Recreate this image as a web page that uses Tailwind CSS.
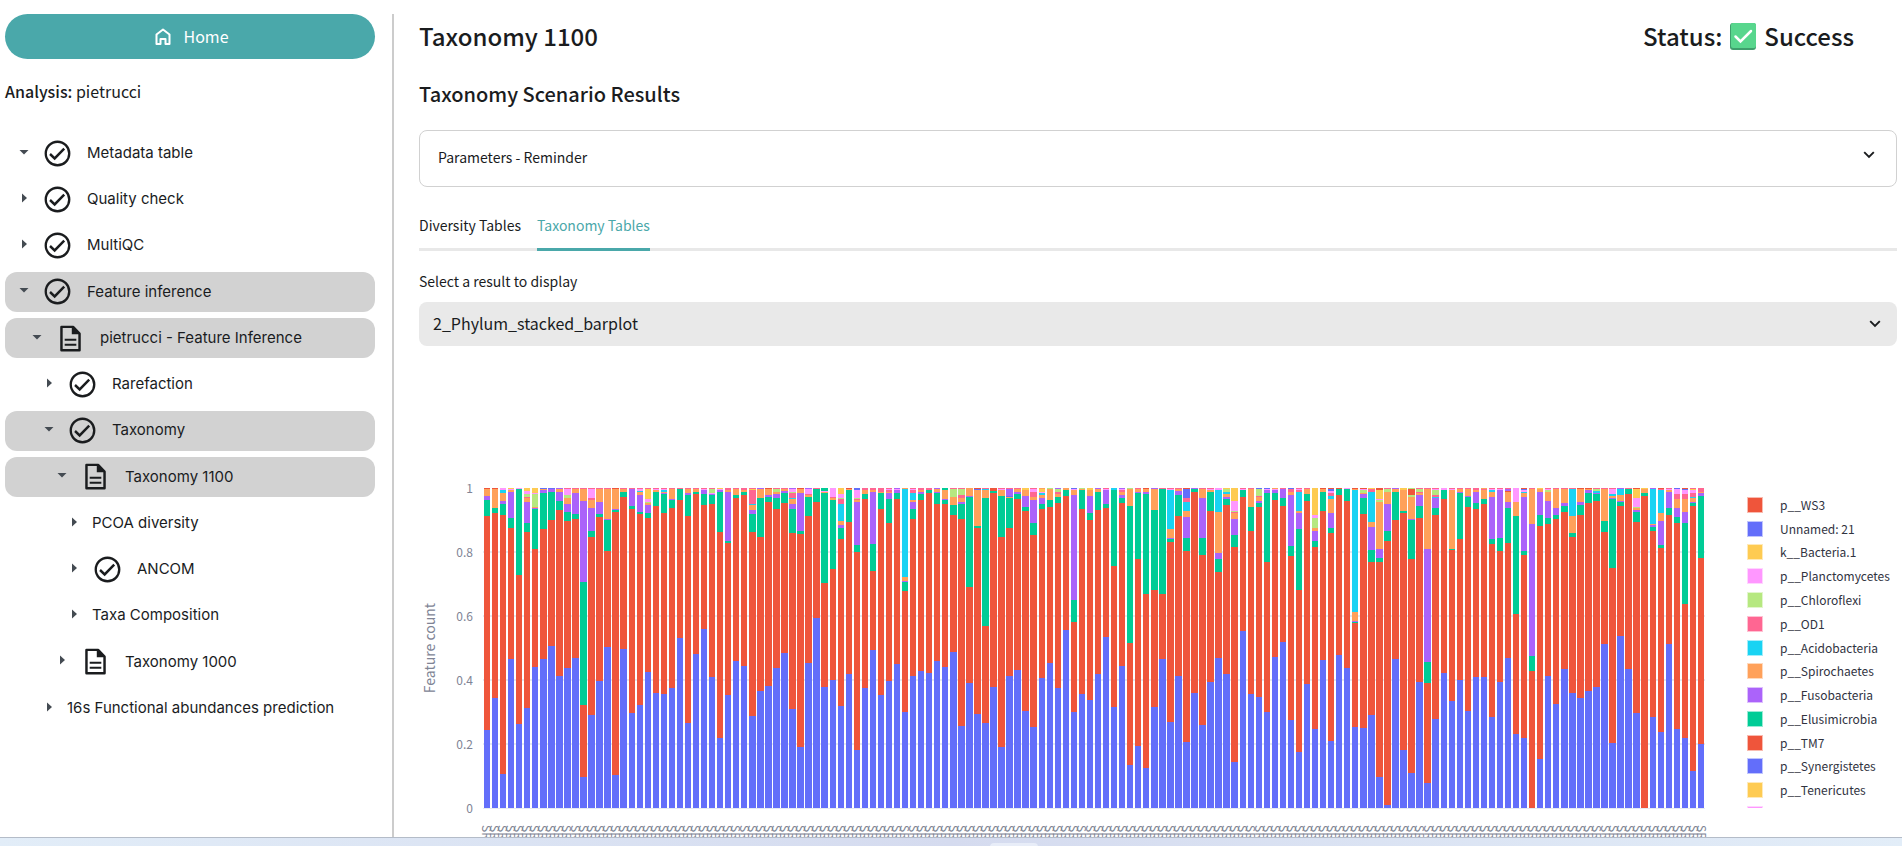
<!DOCTYPE html>
<html lang="en">
    <head>
        <meta charset="UTF-8">
        <meta name="viewport" content="width=device-width, initial-scale=1.0">
        <title>Taxonomy 1100 | pietrucci</title>
        <script src="https://cdn.jsdelivr.net/npm/@tailwindcss/browser@4"></script>
    </head>
    <body class="bg-white text-[#1a1c1e] font-['Noto_Sans_CJK_SC',sans-serif] h-screen flex flex-col overflow-hidden">

        <!-- Icons -->
        <svg class="hidden">
            <symbol id="check" viewBox="0 0 24 24"><circle cx="12" cy="12" r="9.1" fill="none" stroke="currentColor" stroke-width="1.8"/><path d="M6.2 12.400l3.600 3.400 7.400-7.600" fill="none" stroke="currentColor" stroke-width="1.900"/></symbol>
            <symbol id="doc" viewBox="0 0 24 24"><path d="M5 3h9l5 5.200v12.900H5z" fill="none" stroke="currentColor" stroke-width="1.9" stroke-linejoin="round"/><path d="M13 2.500v6.200h6.500zM7.500 12.100h9v1.700h-9zM7.500 16h9v1.700h-9z" fill="currentColor"/></symbol>
            <symbol id="chevron" viewBox="0 0 12 8"><path d="M1.200 1.200L6 6l4.800-4.800" fill="none" stroke="currentColor" stroke-width="1.900"/></symbol>
        </svg>

        <div class="flex flex-1 min-h-0 pt-[14px]">

            <!-- Sidebar -->
            <aside class="w-[394px] shrink-0 border-r-2 border-[#cccccc] pl-[5px] pr-[17px]">
                <button class="w-full h-[45px] pb-[2px] pl-1 rounded-full bg-[#4aa8aa] text-white text-base leading-6 flex items-center justify-center gap-3">
                    <svg class="w-4 h-[18px] mt-[2px]" viewBox="0 0 16 18" fill="none" stroke="currentColor" stroke-width="2"><path d="M1.500 6.500L8 1.500l6.500 5V16H10.500v-5h-5v5H1.500z" stroke-linejoin="round"/></svg>
                    Home
                </button>
                <p class="mt-5 text-base leading-6"><b class="font-medium">Analysis:</b> pietrucci</p>
                <ul id="tree" class="mt-[30px] h-[595px] flex flex-col justify-between font-['Inter',sans-serif] text-[15px]"></ul>
            </aside>

            <!-- Main Content -->
            <main class="flex-1 min-w-0 pl-[25px] pr-[5px] overflow-hidden">
                <div class="flex justify-between items-center pr-[43px] h-11 text-2xl font-medium">
                    <h1>Taxonomy 1100</h1>
                    <p class="flex items-center gap-2">Status:
                        <svg class="w-[26px] h-[27px]" viewBox="0 0 26 27"><rect width="26" height="27" rx="3" fill="#3f9e6c"/><rect x="1" y="0" width="25" height="25" rx="2" fill="#58d68d"/><path d="M5.500 13.500l5 5L21 8" fill="none" stroke="#fff" stroke-width="2.500" stroke-linecap="round"/></svg>
                        Success</p>
                </div>
                <h2 class="mt-5 text-xl leading-8 font-medium">Taxonomy Scenario Results</h2>

                <button class="mt-5 w-full h-[57px] pb-[3px] border border-[#d1d1d1] rounded-lg pl-[18px] pr-[21px] flex items-center justify-between text-sm">
                    Parameters - Reminder
                    <svg class="w-3 h-2 mb-1"><use href="#chevron"/></svg>
                </button>

                <div class="mt-[22px] flex gap-4 border-b-[3px] border-[#e8e8e8] text-sm leading-8">
                    <button class="h-[39px] pb-[7px]">Diversity Tables</button>
                    <button class="h-[42px] pb-[7px] -mb-[3px] border-b-[3px] border-[#4aa8aa] text-[#4aa8aa]">Taxonomy Tables</button>
                </div>

                <label for="result" class="block mt-5 text-sm leading-5">Select a result to display</label>
                <div class="relative mt-[11px]">
                    <select id="result" class="block w-full h-11 rounded-lg bg-[#e9e9e9] px-[14px] pb-[2px] appearance-none text-base leading-6">
                        <option>2_Phylum_stacked_barplot</option>
                    </select>
                    <svg class="absolute right-4 top-[18px] w-3 h-2"><use href="#chevron"/></svg>
                </div>

                <!-- Stacked barplot -->
                <div class="mt-[142px] flex text-xs text-[#808495]">
                    <div class="w-5 h-80 flex items-center justify-center"><span class="[writing-mode:vertical-rl] rotate-180 text-sm">Feature count</span></div>
                    <div class="w-[34px] h-[336px] -my-2 flex flex-col justify-between text-right leading-4">
                        <span>1</span><span>0.8</span><span>0.6</span><span>0.4</span><span>0.2</span><span>0</span>
                    </div>
                    <div class="flex-1 ml-[10px] min-w-0">
                        <svg id="plot" class="block w-full h-[321px]" viewBox="0 0 1520 321" preserveAspectRatio="none" shape-rendering="crispEdges"></svg>
                        <div id="ticks" class="flex mt-4"></div>
                    </div>
                    <div class="w-[192px] h-80 overflow-hidden pt-[5px] pl-[42px]">
                        <ul id="legend" class="h-[333px] flex flex-col text-[#31333f]"></ul>
                    </div>
                </div>
            </main>
        </div>

        <footer class="relative h-[9px] shrink-0 border-t border-[#b4bcc8] bg-linear-to-r from-[#e2edf8] via-[#d5dbef] to-[#e2edf8]"><span class="absolute left-[990px] top-[5px] w-12 h-1 rounded-t bg-[#e8edf8]"></span></footer>

        <script>
            // [level, open, icon, label, selected]
            const tree = [
                [0, 1, 'check', 'Metadata table', 0],
                [0, 0, 'check', 'Quality check', 0],
                [0, 0, 'check', 'MultiQC', 0],
                [0, 1, 'check', 'Feature inference', 1],
                [1, 1, 'doc', 'pietrucci - Feature Inference', 1],
                [2, 0, 'check', 'Rarefaction', 0],
                [2, 1, 'check', 'Taxonomy', 1],
                [3, 1, 'doc', 'Taxonomy 1100', 1],
                [4, 0, '', 'PCOA diversity', 0],
                [4, 0, 'check', 'ANCOM', 0],
                [4, 0, '', 'Taxa Composition', 0],
                [3, 0, 'doc', 'Taxonomy 1000', 0],
                [2, 0, '', '16s Functional abundances prediction', 0],
            ];
            const indent = ['pl-[14px]', 'pl-[27px]', 'pl-[39px]', 'pl-[52px]', 'pl-[64px]'];
            document.getElementById('tree').innerHTML = tree.map(([level, open, icon, label, selected]) => `
                <li class="h-10 rounded-xl flex items-center ${indent[level]} ${selected ? 'bg-[#d2d2d2]' : ''}">
                    <svg class="w-[10px] h-[10px] mb-[3px] text-[#444b52]" viewBox="0 0 10 10"><path d="${open ? 'M0.500 3h9L5 7.500z' : 'M3 0.500v9L8 5z'}" fill="currentColor"/></svg>
                    ${icon ? `<svg class="w-[31px] h-[31px] ml-[13px] mr-[14px]"><use href="#${icon}"/></svg>` : '<span class="w-[13px]"></span>'}
                    <a href="#">${label}</a>
                </li>`).join('');

            // layer -> colour, uppercase letters are the second turn of the palette
            const colors = {b: '#636efa', r: '#ef553b', g: '#00cc96', p: '#ab63fa', o: '#ffa15a', c: '#19d3f3', k: '#ff6692', l: '#b6e880', m: '#ff97ff', y: '#fecb52', B: '#636efa', R: '#ef553b'};

            // one sample per word, from the bottom up: layer and the y of its top, 320 is the axis
            const samples = `
                b242r28g12p8o1R0 b210r25g20o1R0 b286r27g16p13o5c2m0 b171r40g30p4o2m1y0 b236r87g1m0 b220r44g35p14o10k9l6m3y0 b179r61g21p20o19l6m5y0 b171r41g5p2o1B0
                b158r32g4p1B0 b188r22g13p4o1p0 b180r33g24p16o10l7m1k0 b170r31g26p5o1k0 b289r217g94p13o1k0 b227r49g43p20o12k10m1k0 b193r29g26p14o1k0 b159r63g32p31o1k0
                b287r24g22p21o1R0 b161r9g4o1k0 b225r21g18p1k0 b217r26g24p7o4c3m1k0 b184r30g25p17o15l14m11y1k0 b205r18g4o2m1k0 b206r25g6p5o4c2m1k0 b200r20g12p11o1k0
                b150r12g1k0 b235r28g7p5o1k0 b166r6g4o1k0 b141r17g6p2m1k0 b189r16g7p6m5l1k0 b250r44g4p2m1y0 b207r55g53p4o2k0 b173r10g7o1k0
                b178r7g4o2k0 b228r44g26p22o17c16k2y1k0 b203r49g10o1p0 b198r14g9p7o1R0 b180r21g10p6o4l1k0 b165r15g5p3o1k0 b221r45g21p16o11c10k5l4m1p0 b259r46g43p5o1R0
                b175r28g9o7k6m1p0 b130r14g1k0 b199r95g5o4m3g0 b192r81g12o10k9m0 b218r51g40p37o33c16k11l10m6y0 b186r34g2o1R0 b262r64g57p14o12k11l10m2B0 b200r11g6o2k0
                b162r83g56p4o2k0 b207r21g5o4k0 b193r35g11p5o4k2m1k0 b176r11g5p2m1p0 b224r103g94p93o89c1o0 b188r31g21p14o12c5k2m1k0 b183r12g6p4o2k0 b185r5g2k0
                b173r16g5p4o1p0 b179r16g12p11o2g0 b164r27g17o9l1k0 b238r31g16p14o10k7l1k0 b195r99g9p8o0 b226r40g38o2B1R0 b235r138g10o2c1k0 b199r5g3R0
                b259r49g8o2m1k0 b188r40g10o9B8p1k0 b182r11g6p4o1k0 b223r23g19p8o2y0 b239r47g35p12o9k4m1k0 b190r21g16p10o7c5m4y1o0 b175r19g12o1l0 b200r15g9o6k4l1p0
                b142r8g2o0 b224r134g112p7o2m1B0 b206r21g2o1l0 b212r32g25p8o2y0 b186r22g4o1p0 b149r20g16p2m1k0 b219r78g2c0 b178r15g10p7o4k2m1p0
                b277r155g18o1l0 b258r71g5p4o1k0 b280r106g6p4o1R0 b219r102g22o1p0 b171r106g1k0 b234r54g51p50o41c2m1k0 b188r28g7p3o1k0 b254r63g50p29o23c14k10B1R0
                b205r4g1p0 b237r67g50p10o1k0 b194r23g4o2m1k0 b170r84g71p65o24c2m0 b186r17g11p9o6c4l1y0 b274r59g47p31o25k24l23m13y0 b143r9g2m1k0 b206r43g19o1k0
                b209r19g15p13o9k8l1B0 b224r74g5p2m1B0 b169r12g5p2m1o0 b154r18g10p1k0 b232r68g58p7o4k1B0 b264r102g41p25o23c4k2m1k0 b196r13g6o1k0 b241r59g53p43o40l30m27y0
                b172r23g4o1R0 b253r45g40p25o11c8k5m3B1R0 b167r7g1R0 b180r13g1m0 b239r135g134p133o124c2o1R0 b240r26g10p6o5l2m1R0 b227r74g62p39o34c4k1y0 b289r74g70p61o14l12m11y2R0
                b317r53g43p16o4l1k0 b171r32g4o1p0 b262r25g23o2y0 b285r71g32p31o9l7R1l0 b194r30g18p7o5k4l1k0 b295r195g174p61o1k0 b231r27g20p10c9k7l2m1k0 b185r11g2m0
                b213r62g61o2m1k0 b192r51g5p4o1k0 b223r19g9p8o1k0 b189r21g15p4o2k0 b189r16g11o2k1o0 b229r56g51p9o4c2m1k0 b194r63g50p2m1k0 b170r55g20p14o4R3p1k0
                b246r126g28o14m0 b250r67g63p9o5c4m2B1R0 b320r183g168p36o1k0 b271r38g27p4o1y0 b188r36g30p13o4l2m1k0 b216r31g27p20o1k0 b181r24g18p15o1k0 b205r49g45o28c1k0
                b210r27g17p14o1R0 b203r15g5p2o1R0 b199r13g6p5c3l1k0 b156r44g33o1k0 b255r80g11p10o8c6m1k0 b148r18g14p13o7c1p0 b181r6g1k0 b225r34g24p22o20l19m10y1R0
                b320r8g5o1y0 b229r43g39p37o36c1p0 b244r60g57p33o25c2k1R0 b156r27g20p4o2m1k0 b241r35g29p20o11k6m1B0 b250r116g35p24o11k6m2B1R0 b283r18g15p14o10c9k5m2y1k0 b256r70g8p5o4k0
            `.trim().split(/\s+/);

            let svg = '';
            for (const y of [64, 128, 192, 256, 319]) {
                svg += `<rect x="0" y="${y - (y < 319 ? 1 : -1)}" width="1520" height="${y < 319 ? 2 : 1}" fill="#e6eaf1"/>`;
            }
            samples.forEach((sample, i) => {
                let bottom = 320;
                for (const [, layer, top] of sample.matchAll(/([a-zA-Z])(\d+)/g)) {
                    svg += `<rect x="${i * 10 + 1}" y="${top}" width="8" height="${bottom - top}" fill="${colors[layer]}"/>`;
                    bottom = +top;
                }
            });
            document.getElementById('plot').innerHTML = svg;
            document.getElementById('ticks').innerHTML = samples.map(() =>
                '<span class="flex-1 w-0 flex justify-center [writing-mode:vertical-rl] leading-3 items-center">SRR</span>').join('');

            const legend = [['R', 'p__WS3'], ['B', 'Unnamed: 21'], ['y', 'k__Bacteria.1'], ['m', 'p__Planctomycetes'], ['l', 'p__Chloroflexi'], ['k', 'p__OD1'], ['c', 'p__Acidobacteria'],
                ['o', 'p__Spirochaetes'], ['p', 'p__Fusobacteria'], ['g', 'p__Elusimicrobia'], ['r', 'p__TM7'], ['b', 'p__Synergistetes'], ['y', 'p__Tenericutes'], ['m', '']];
            document.getElementById('legend').innerHTML = legend.map(([layer, name]) => `
                <li class="flex-1 flex items-center gap-[17px]"><span class="w-4 h-4 border border-white/60" style="background-color: ${colors[layer]}"></span>${name}</li>`).join('');
        </script>
    </body>
</html>
